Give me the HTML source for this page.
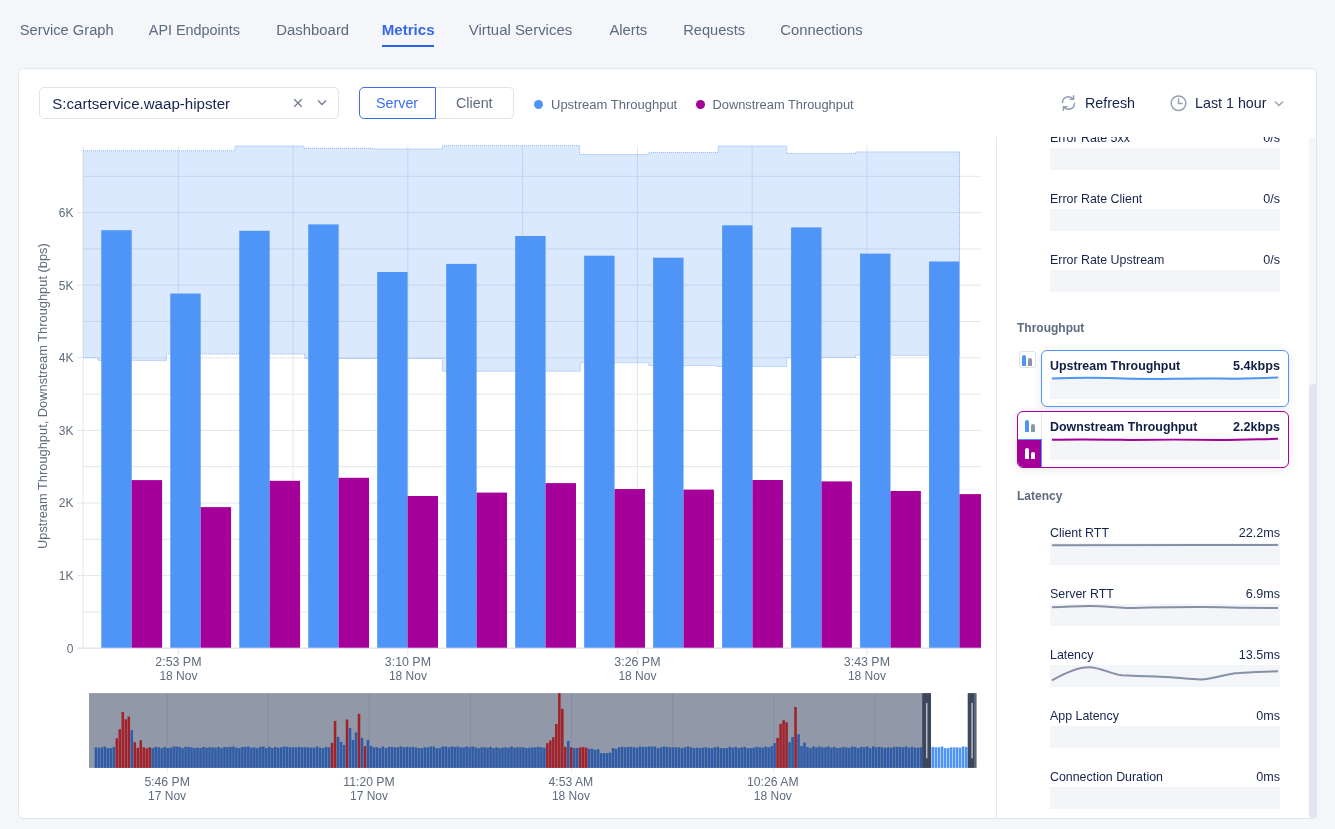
<!DOCTYPE html>
<html><head><meta charset="utf-8"><style>
*{box-sizing:border-box}
html,body{margin:0;padding:0}
body{width:1335px;height:829px;overflow:hidden;background:#f5f6f9;position:relative;font-family:"Liberation Sans",sans-serif;-webkit-font-smoothing:antialiased}
#wrap{position:absolute;left:0;top:0;width:1335px;height:829px;will-change:transform}
.tab{position:absolute;top:21px;font-size:14.6px;line-height:18px;color:#5b6a80;white-space:nowrap}
.tab.act{color:#3668e9;font-weight:700}
.uline{position:absolute;left:382px;top:45px;width:52px;height:2px;background:#2a61ef}
.card{position:absolute;left:18px;top:68px;width:1299px;height:751px;background:#fff;border:1px solid #e1e5ee;border-radius:5px}
.abs{position:absolute;white-space:nowrap}
.box{position:absolute;border:1px solid #dfe3ec;border-radius:5px;background:#fff}
.lab{position:absolute;left:1050px;font-size:12.4px;line-height:14px;color:#15244d;white-space:nowrap}
.val{position:absolute;right:55px;font-size:12.6px;line-height:14px;color:#15244d;white-space:nowrap;text-align:right}
.spk{position:absolute;left:1050px;width:230px;height:22px;background:#f4f5f8}
.sect{position:absolute;left:1017px;font-size:12px;font-weight:700;color:#5d6b80;line-height:14px;white-space:nowrap}
.tcard{position:absolute;border:1px solid;border-radius:6px;background:#fff;box-shadow:0 2px 10px rgba(30,40,70,0.10)}
.ibox{position:absolute;width:17px;height:17px;border:1px solid #dfe3ec;border-radius:3px;background:#fff}
.ib{position:absolute;width:4px;border-radius:2px 2px 0 0}
.panel{position:absolute;left:996px;top:137px;width:320px;height:681px;overflow:hidden}
</style></head><body><div id="wrap">
<div class="tab" style="left:19.8px;font-size:14.7px">Service Graph</div>
<div class="tab" style="left:148.8px;font-size:14.4px">API Endpoints</div>
<div class="tab" style="left:276.3px;font-size:14.9px">Dashboard</div>
<div class="tab act" style="left:381.7px;font-size:15.1px">Metrics</div>
<div class="tab" style="left:468.7px;font-size:14.95px">Virtual Services</div>
<div class="tab" style="left:609.4px;font-size:14.8px">Alerts</div>
<div class="tab" style="left:683.2px;font-size:14.65px">Requests</div>
<div class="tab" style="left:780.2px;font-size:14.85px">Connections</div>
<div class="uline"></div>
<div class="card"></div>

<div class="box" style="left:39px;top:87px;width:300px;height:32px;border-color:#dfe3ec"></div>
<div class="abs" style="left:52.3px;top:94.5px;font-size:15.1px;line-height:17px;color:#15244d">S:cartservice.waap-hipster</div>
<svg class="abs" style="left:293px;top:97.5px" width="10" height="10" viewBox="0 0 10 10"><path d="M1.3,1.3 L8.7,8.7 M8.7,1.3 L1.3,8.7" stroke="#6f7c90" stroke-width="1.3"/></svg>
<svg class="abs" style="left:317px;top:99px" width="10" height="7" viewBox="0 0 10 7"><path d="M1,1.5 L5,5.5 L9,1.5" fill="none" stroke="#6f7c90" stroke-width="1.3"/></svg>
<div class="box" style="left:436px;top:87px;width:78px;height:32px;border-color:#dfe3ec;border-left:none;border-radius:0 5px 5px 0"></div>
<div class="box" style="left:359px;top:87px;width:77px;height:32px;border-color:#3a6ef0;border-radius:5px 0 0 5px"></div>
<div class="abs" style="left:376px;top:95px;font-size:14.3px;line-height:17px;color:#3a6ef0">Server</div>
<div class="abs" style="left:456px;top:95px;font-size:14.3px;line-height:17px;color:#5d6b80">Client</div>
<div class="abs" style="left:534px;top:100px;width:9.4px;height:9.4px;border-radius:50%;background:#4f95f7"></div>
<div class="abs" style="left:551px;top:97px;font-size:13px;line-height:15px;color:#5d6b80">Upstream Throughput</div>
<div class="abs" style="left:696px;top:100px;width:9.4px;height:9.4px;border-radius:50%;background:#a5009a"></div>
<div class="abs" style="left:712.5px;top:97px;font-size:12.85px;line-height:15px;color:#5d6b80">Downstream Throughput</div>
<svg class="abs" style="left:1060px;top:94px" width="17" height="18" viewBox="0 0 17 18"><g fill="none" stroke="#939fb3" stroke-width="1.5" stroke-linecap="round"><path d="M2.5,8.5 A6,6 0 0 1 13.2,5"/><path d="M13.6,1.8 L13.6,5.3 L10.2,5.3"/><path d="M14.5,9.5 A6,6 0 0 1 3.8,13"/><path d="M3.4,16.2 L3.4,12.7 L6.8,12.7"/></g></svg>
<div class="abs" style="left:1085px;top:95px;font-size:14.3px;line-height:17px;color:#15244d">Refresh</div>
<svg class="abs" style="left:1169px;top:94px" width="19" height="18" viewBox="0 0 19 18"><g fill="none" stroke="#939fb3" stroke-width="1.5"><circle cx="9.5" cy="9.2" r="7.3"/><path d="M9.5,5 L9.5,9.5 L13,9.5" stroke-linecap="round"/></g></svg>
<div class="abs" style="left:1195px;top:95px;font-size:14.3px;line-height:17px;color:#15244d">Last 1 hour</div>
<svg class="abs" style="left:1274px;top:100px" width="10" height="7" viewBox="0 0 10 7"><path d="M1,1.5 L5,5.5 L9,1.5" fill="none" stroke="#939fb3" stroke-width="1.3"/></svg>

<svg width="1335" height="829" style="position:absolute;left:0;top:0;font-family:'Liberation Sans',sans-serif">
<line x1="83" y1="648.2" x2="981" y2="648.2" stroke="#e3e6ec" stroke-width="1"/>
<line x1="83" y1="611.9" x2="981" y2="611.9" stroke="#e3e6ec" stroke-width="1"/>
<line x1="83" y1="575.6" x2="981" y2="575.6" stroke="#e3e6ec" stroke-width="1"/>
<line x1="83" y1="539.3" x2="981" y2="539.3" stroke="#e3e6ec" stroke-width="1"/>
<line x1="83" y1="503.0" x2="981" y2="503.0" stroke="#e3e6ec" stroke-width="1"/>
<line x1="83" y1="466.7" x2="981" y2="466.7" stroke="#e3e6ec" stroke-width="1"/>
<line x1="83" y1="430.4" x2="981" y2="430.4" stroke="#e3e6ec" stroke-width="1"/>
<line x1="83" y1="394.1" x2="981" y2="394.1" stroke="#e3e6ec" stroke-width="1"/>
<line x1="83" y1="357.8" x2="981" y2="357.8" stroke="#e3e6ec" stroke-width="1"/>
<line x1="83" y1="321.5" x2="981" y2="321.5" stroke="#e3e6ec" stroke-width="1"/>
<line x1="83" y1="285.2" x2="981" y2="285.2" stroke="#e3e6ec" stroke-width="1"/>
<line x1="83" y1="248.9" x2="981" y2="248.9" stroke="#e3e6ec" stroke-width="1"/>
<line x1="83" y1="212.6" x2="981" y2="212.6" stroke="#e3e6ec" stroke-width="1"/>
<line x1="83" y1="176.3" x2="981" y2="176.3" stroke="#e3e6ec" stroke-width="1"/>
<line x1="83.0" y1="145.7" x2="83.0" y2="648.2" stroke="#e3e6ec" stroke-width="1"/>
<line x1="178.4" y1="145.7" x2="178.4" y2="648.2" stroke="#e3e6ec" stroke-width="1"/>
<line x1="293.1" y1="145.7" x2="293.1" y2="648.2" stroke="#e3e6ec" stroke-width="1"/>
<line x1="407.9" y1="145.7" x2="407.9" y2="648.2" stroke="#e3e6ec" stroke-width="1"/>
<line x1="522.6" y1="145.7" x2="522.6" y2="648.2" stroke="#e3e6ec" stroke-width="1"/>
<line x1="637.4" y1="145.7" x2="637.4" y2="648.2" stroke="#e3e6ec" stroke-width="1"/>
<line x1="752.1" y1="145.7" x2="752.1" y2="648.2" stroke="#e3e6ec" stroke-width="1"/>
<line x1="866.9" y1="145.7" x2="866.9" y2="648.2" stroke="#e3e6ec" stroke-width="1"/>
<path d="M83.0,150.7 L235.0,150.7 L235.0,146.0 L304.0,146.0 L304.0,148.3 L373.4,148.3 L373.4,149.0 L442.3,149.0 L442.3,145.7 L579.6,145.7 L579.6,154.5 L648.9,154.5 L648.9,152.4 L718.2,152.4 L718.2,146.0 L786.8,146.0 L786.8,153.5 L855.5,153.5 L855.5,151.9 L960.0,151.9 L960.0,355.3 L855.5,355.3 L855.5,357.4 L786.8,357.4 L786.8,366.5 L717.3,366.5 L717.3,365.6 L648.9,365.6 L648.9,362.8 L580.2,362.8 L580.2,371.2 L442.3,371.2 L442.3,358.5 L304.7,358.5 L304.7,354.0 L166.5,354.0 L166.5,360.4 L97.8,360.4 L97.8,357.7 L83.0,357.7 Z" fill="#4f95f7" fill-opacity="0.21"/>
<path d="M83.0,150.7 L235.0,150.7 L235.0,146.0 L304.0,146.0 L304.0,148.3 L373.4,148.3 L373.4,149.0 L442.3,149.0 L442.3,145.7 L579.6,145.7 L579.6,154.5 L648.9,154.5 L648.9,152.4 L718.2,152.4 L718.2,146.0 L786.8,146.0 L786.8,153.5 L855.5,153.5 L855.5,151.9 L960.0,151.9" fill="none" stroke="#8db5f5" stroke-width="1" stroke-dasharray="1,1"/>
<path d="M83.0,357.7 L97.8,357.7 L97.8,360.4 L166.5,360.4 L166.5,354.0 L304.7,354.0 L304.7,358.5 L442.3,358.5 L442.3,371.2 L580.2,371.2 L580.2,362.8 L648.9,362.8 L648.9,365.6 L717.3,365.6 L717.3,366.5 L786.8,366.5 L786.8,357.4 L855.5,357.4 L855.5,355.3 L960.0,355.3" fill="none" stroke="#8db5f5" stroke-width="1" stroke-dasharray="1,1"/>
<clipPath id="pc"><rect x="83" y="0" width="898" height="829"/></clipPath><g clip-path="url(#pc)">
<rect x="101.30" y="230.2" width="30.4" height="418.0" fill="#4f95f7"/>
<rect x="131.70" y="480.1" width="30.4" height="168.1" fill="#a5009a"/>
<rect x="170.28" y="293.5" width="30.4" height="354.7" fill="#4f95f7"/>
<rect x="200.68" y="507.1" width="30.4" height="141.1" fill="#a5009a"/>
<rect x="239.26" y="230.8" width="30.4" height="417.4" fill="#4f95f7"/>
<rect x="269.66" y="480.8" width="30.4" height="167.4" fill="#a5009a"/>
<rect x="308.24" y="224.4" width="30.4" height="423.8" fill="#4f95f7"/>
<rect x="338.64" y="477.8" width="30.4" height="170.4" fill="#a5009a"/>
<rect x="377.22" y="272" width="30.4" height="376.2" fill="#4f95f7"/>
<rect x="407.62" y="496" width="30.4" height="152.2" fill="#a5009a"/>
<rect x="446.20" y="263.9" width="30.4" height="384.3" fill="#4f95f7"/>
<rect x="476.60" y="492.6" width="30.4" height="155.6" fill="#a5009a"/>
<rect x="515.18" y="236" width="30.4" height="412.2" fill="#4f95f7"/>
<rect x="545.58" y="483.1" width="30.4" height="165.1" fill="#a5009a"/>
<rect x="584.16" y="255.7" width="30.4" height="392.5" fill="#4f95f7"/>
<rect x="614.56" y="489" width="30.4" height="159.2" fill="#a5009a"/>
<rect x="653.14" y="257.7" width="30.4" height="390.5" fill="#4f95f7"/>
<rect x="683.54" y="489.6" width="30.4" height="158.6" fill="#a5009a"/>
<rect x="722.12" y="225.3" width="30.4" height="422.9" fill="#4f95f7"/>
<rect x="752.52" y="480" width="30.4" height="168.2" fill="#a5009a"/>
<rect x="791.10" y="227.4" width="30.4" height="420.8" fill="#4f95f7"/>
<rect x="821.50" y="481.4" width="30.4" height="166.8" fill="#a5009a"/>
<rect x="860.08" y="253.6" width="30.4" height="394.6" fill="#4f95f7"/>
<rect x="890.48" y="491" width="30.4" height="157.2" fill="#a5009a"/>
<rect x="929.06" y="261.5" width="30.4" height="386.7" fill="#4f95f7"/>
<rect x="959.46" y="494.1" width="30.4" height="154.1" fill="#a5009a"/>
</g>
<line x1="959.5" y1="151.9" x2="959.5" y2="355.3" stroke="#8db5f5" stroke-width="1" stroke-dasharray="1,1"/>
<line x1="77" y1="648.2" x2="981" y2="648.2" stroke="#e3e6ec" stroke-width="1"/>
<line x1="77" y1="648.2" x2="83" y2="648.2" stroke="#e3e6ec" stroke-width="1"/>
<text x="73.5" y="652.6" text-anchor="end" font-size="12" fill="#5f6b7e">0</text>
<line x1="77" y1="575.6" x2="83" y2="575.6" stroke="#e3e6ec" stroke-width="1"/>
<text x="73.5" y="580.0" text-anchor="end" font-size="12" fill="#5f6b7e">1K</text>
<line x1="77" y1="503.0" x2="83" y2="503.0" stroke="#e3e6ec" stroke-width="1"/>
<text x="73.5" y="507.4" text-anchor="end" font-size="12" fill="#5f6b7e">2K</text>
<line x1="77" y1="430.4" x2="83" y2="430.4" stroke="#e3e6ec" stroke-width="1"/>
<text x="73.5" y="434.8" text-anchor="end" font-size="12" fill="#5f6b7e">3K</text>
<line x1="77" y1="357.8" x2="83" y2="357.8" stroke="#e3e6ec" stroke-width="1"/>
<text x="73.5" y="362.2" text-anchor="end" font-size="12" fill="#5f6b7e">4K</text>
<line x1="77" y1="285.2" x2="83" y2="285.2" stroke="#e3e6ec" stroke-width="1"/>
<text x="73.5" y="289.6" text-anchor="end" font-size="12" fill="#5f6b7e">5K</text>
<line x1="77" y1="212.6" x2="83" y2="212.6" stroke="#e3e6ec" stroke-width="1"/>
<text x="73.5" y="217.0" text-anchor="end" font-size="12" fill="#5f6b7e">6K</text>
<text transform="translate(47,549) rotate(-90)" font-size="12.85" fill="#5f6b7e">Upstream Throughput, Downstream Throughput (bps)</text>
<line x1="178.4" y1="648.2" x2="178.4" y2="655.2" stroke="#e3e6ec"/>
<text x="178.4" y="666" text-anchor="middle" font-size="12.4" fill="#5f6b7e">2:53 PM</text>
<text x="178.4" y="679.5" text-anchor="middle" font-size="12" fill="#5f6b7e">18 Nov</text>
<line x1="407.9" y1="648.2" x2="407.9" y2="655.2" stroke="#e3e6ec"/>
<text x="407.9" y="666" text-anchor="middle" font-size="12.4" fill="#5f6b7e">3:10 PM</text>
<text x="407.9" y="679.5" text-anchor="middle" font-size="12" fill="#5f6b7e">18 Nov</text>
<line x1="637.4" y1="648.2" x2="637.4" y2="655.2" stroke="#e3e6ec"/>
<text x="637.4" y="666" text-anchor="middle" font-size="12.4" fill="#5f6b7e">3:26 PM</text>
<text x="637.4" y="679.5" text-anchor="middle" font-size="12" fill="#5f6b7e">18 Nov</text>
<line x1="866.9" y1="648.2" x2="866.9" y2="655.2" stroke="#e3e6ec"/>
<text x="866.9" y="666" text-anchor="middle" font-size="12.4" fill="#5f6b7e">3:43 PM</text>
<text x="866.9" y="679.5" text-anchor="middle" font-size="12" fill="#5f6b7e">18 Nov</text>
<rect x="89" y="693.1" width="887.6" height="74.8" fill="#ffffff"/>
<rect x="89" y="693.1" width="833.1" height="74.8" fill="#9198a7"/>
<rect x="974" y="693.1" width="2.6" height="74.8" fill="#5d6679"/>
<line x1="167.1" y1="693.1" x2="167.1" y2="767.9" stroke="#7f879a" stroke-opacity="0.6"/>
<line x1="167.1" y1="767.9" x2="167.1" y2="772.9" stroke="#e6e9ef"/>
<line x1="268.2" y1="693.1" x2="268.2" y2="767.9" stroke="#7f879a" stroke-opacity="0.6"/>
<line x1="369.3" y1="693.1" x2="369.3" y2="767.9" stroke="#7f879a" stroke-opacity="0.6"/>
<line x1="369.3" y1="767.9" x2="369.3" y2="772.9" stroke="#e6e9ef"/>
<line x1="470.4" y1="693.1" x2="470.4" y2="767.9" stroke="#7f879a" stroke-opacity="0.6"/>
<line x1="571.5" y1="693.1" x2="571.5" y2="767.9" stroke="#7f879a" stroke-opacity="0.6"/>
<line x1="571.5" y1="767.9" x2="571.5" y2="772.9" stroke="#e6e9ef"/>
<line x1="672.6" y1="693.1" x2="672.6" y2="767.9" stroke="#7f879a" stroke-opacity="0.6"/>
<line x1="773.7" y1="693.1" x2="773.7" y2="767.9" stroke="#7f879a" stroke-opacity="0.6"/>
<line x1="773.7" y1="767.9" x2="773.7" y2="772.9" stroke="#e6e9ef"/>
<line x1="874.8" y1="693.1" x2="874.8" y2="767.9" stroke="#7f879a" stroke-opacity="0.6"/>
<rect x="94.60" y="747.3" width="2.55" height="20.6" fill="#2f5ca8"/>
<rect x="97.59" y="747.7" width="2.55" height="20.2" fill="#2f5ca8"/>
<rect x="100.58" y="747.3" width="2.55" height="20.6" fill="#2f5ca8"/>
<rect x="103.57" y="746.5" width="2.55" height="21.4" fill="#2f5ca8"/>
<rect x="106.56" y="748.1" width="2.55" height="19.8" fill="#2f5ca8"/>
<rect x="109.55" y="748.1" width="2.55" height="19.8" fill="#2f5ca8"/>
<rect x="112.54" y="746.9" width="2.55" height="21.0" fill="#2f5ca8"/>
<rect x="115.53" y="738.3" width="2.55" height="29.6" fill="#a3222a"/>
<rect x="118.52" y="729.3" width="2.55" height="38.6" fill="#a3222a"/>
<rect x="121.51" y="712.0" width="2.55" height="55.9" fill="#a3222a"/>
<rect x="124.50" y="719.3" width="2.55" height="48.6" fill="#a3222a"/>
<rect x="127.49" y="716.6" width="2.55" height="51.3" fill="#a3222a"/>
<rect x="130.48" y="730.1" width="2.55" height="37.8" fill="#2f5ca8"/>
<rect x="133.47" y="742.3" width="2.55" height="25.6" fill="#a3222a"/>
<rect x="136.46" y="747.9" width="2.55" height="20.0" fill="#a3222a"/>
<rect x="139.45" y="740.3" width="2.55" height="27.6" fill="#a3222a"/>
<rect x="142.44" y="747.3" width="2.55" height="20.6" fill="#a3222a"/>
<rect x="145.43" y="748.4" width="2.55" height="19.5" fill="#a3222a"/>
<rect x="148.42" y="747.3" width="2.55" height="20.6" fill="#a3222a"/>
<rect x="151.41" y="748.1" width="2.55" height="19.8" fill="#2f5ca8"/>
<rect x="154.40" y="746.9" width="2.55" height="21.0" fill="#2f5ca8"/>
<rect x="157.39" y="747.3" width="2.55" height="20.6" fill="#2f5ca8"/>
<rect x="160.38" y="748.1" width="2.55" height="19.8" fill="#2f5ca8"/>
<rect x="163.37" y="746.9" width="2.55" height="21.0" fill="#2f5ca8"/>
<rect x="166.36" y="748.1" width="2.55" height="19.8" fill="#2f5ca8"/>
<rect x="169.35" y="747.7" width="2.55" height="20.2" fill="#2f5ca8"/>
<rect x="172.34" y="746.5" width="2.55" height="21.4" fill="#2f5ca8"/>
<rect x="175.33" y="746.5" width="2.55" height="21.4" fill="#2f5ca8"/>
<rect x="178.32" y="746.9" width="2.55" height="21.0" fill="#2f5ca8"/>
<rect x="181.31" y="748.1" width="2.55" height="19.8" fill="#2f5ca8"/>
<rect x="184.30" y="746.9" width="2.55" height="21.0" fill="#2f5ca8"/>
<rect x="187.29" y="746.9" width="2.55" height="21.0" fill="#2f5ca8"/>
<rect x="190.28" y="747.3" width="2.55" height="20.6" fill="#2f5ca8"/>
<rect x="193.27" y="748.1" width="2.55" height="19.8" fill="#2f5ca8"/>
<rect x="196.26" y="747.7" width="2.55" height="20.2" fill="#2f5ca8"/>
<rect x="199.25" y="748.1" width="2.55" height="19.8" fill="#2f5ca8"/>
<rect x="202.24" y="746.9" width="2.55" height="21.0" fill="#2f5ca8"/>
<rect x="205.23" y="747.7" width="2.55" height="20.2" fill="#2f5ca8"/>
<rect x="208.22" y="747.3" width="2.55" height="20.6" fill="#2f5ca8"/>
<rect x="211.21" y="747.3" width="2.55" height="20.6" fill="#2f5ca8"/>
<rect x="214.20" y="747.7" width="2.55" height="20.2" fill="#2f5ca8"/>
<rect x="217.19" y="746.9" width="2.55" height="21.0" fill="#2f5ca8"/>
<rect x="220.18" y="748.1" width="2.55" height="19.8" fill="#2f5ca8"/>
<rect x="223.17" y="746.9" width="2.55" height="21.0" fill="#2f5ca8"/>
<rect x="226.16" y="747.3" width="2.55" height="20.6" fill="#2f5ca8"/>
<rect x="229.15" y="746.9" width="2.55" height="21.0" fill="#2f5ca8"/>
<rect x="232.14" y="746.5" width="2.55" height="21.4" fill="#2f5ca8"/>
<rect x="235.13" y="747.7" width="2.55" height="20.2" fill="#2f5ca8"/>
<rect x="238.12" y="748.1" width="2.55" height="19.8" fill="#2f5ca8"/>
<rect x="241.11" y="746.9" width="2.55" height="21.0" fill="#2f5ca8"/>
<rect x="244.10" y="746.9" width="2.55" height="21.0" fill="#2f5ca8"/>
<rect x="247.09" y="746.5" width="2.55" height="21.4" fill="#2f5ca8"/>
<rect x="250.08" y="747.7" width="2.55" height="20.2" fill="#2f5ca8"/>
<rect x="253.07" y="747.3" width="2.55" height="20.6" fill="#2f5ca8"/>
<rect x="256.06" y="748.1" width="2.55" height="19.8" fill="#2f5ca8"/>
<rect x="259.05" y="746.9" width="2.55" height="21.0" fill="#2f5ca8"/>
<rect x="262.04" y="746.5" width="2.55" height="21.4" fill="#2f5ca8"/>
<rect x="265.03" y="748.1" width="2.55" height="19.8" fill="#2f5ca8"/>
<rect x="268.02" y="746.9" width="2.55" height="21.0" fill="#2f5ca8"/>
<rect x="271.01" y="748.1" width="2.55" height="19.8" fill="#2f5ca8"/>
<rect x="274.00" y="746.9" width="2.55" height="21.0" fill="#2f5ca8"/>
<rect x="276.99" y="747.7" width="2.55" height="20.2" fill="#2f5ca8"/>
<rect x="279.98" y="747.3" width="2.55" height="20.6" fill="#2f5ca8"/>
<rect x="282.97" y="746.5" width="2.55" height="21.4" fill="#2f5ca8"/>
<rect x="285.96" y="746.9" width="2.55" height="21.0" fill="#2f5ca8"/>
<rect x="288.95" y="747.3" width="2.55" height="20.6" fill="#2f5ca8"/>
<rect x="291.94" y="747.3" width="2.55" height="20.6" fill="#2f5ca8"/>
<rect x="294.93" y="747.3" width="2.55" height="20.6" fill="#2f5ca8"/>
<rect x="297.92" y="746.9" width="2.55" height="21.0" fill="#2f5ca8"/>
<rect x="300.91" y="747.3" width="2.55" height="20.6" fill="#2f5ca8"/>
<rect x="303.90" y="747.3" width="2.55" height="20.6" fill="#2f5ca8"/>
<rect x="306.89" y="747.3" width="2.55" height="20.6" fill="#2f5ca8"/>
<rect x="309.88" y="747.7" width="2.55" height="20.2" fill="#2f5ca8"/>
<rect x="312.87" y="747.7" width="2.55" height="20.2" fill="#2f5ca8"/>
<rect x="315.86" y="746.5" width="2.55" height="21.4" fill="#2f5ca8"/>
<rect x="318.85" y="747.7" width="2.55" height="20.2" fill="#2f5ca8"/>
<rect x="321.84" y="748.1" width="2.55" height="19.8" fill="#2f5ca8"/>
<rect x="324.83" y="746.9" width="2.55" height="21.0" fill="#2f5ca8"/>
<rect x="327.82" y="747.3" width="2.55" height="20.6" fill="#2f5ca8"/>
<rect x="330.81" y="742.9" width="2.55" height="25.0" fill="#a3222a"/>
<rect x="333.80" y="720.9" width="2.55" height="47.0" fill="#a3222a"/>
<rect x="336.79" y="736.9" width="2.55" height="31.0" fill="#2f5ca8"/>
<rect x="339.78" y="741.9" width="2.55" height="26.0" fill="#2f5ca8"/>
<rect x="342.77" y="744.9" width="2.55" height="23.0" fill="#2f5ca8"/>
<rect x="345.76" y="719.5" width="2.55" height="48.4" fill="#a3222a"/>
<rect x="348.75" y="727.9" width="2.55" height="40.0" fill="#2f5ca8"/>
<rect x="351.74" y="739.9" width="2.55" height="28.0" fill="#2f5ca8"/>
<rect x="354.73" y="732.5" width="2.55" height="35.4" fill="#2f5ca8"/>
<rect x="357.72" y="713.9" width="2.55" height="54.0" fill="#a3222a"/>
<rect x="360.71" y="737.9" width="2.55" height="30.0" fill="#2f5ca8"/>
<rect x="363.70" y="746.2" width="2.55" height="21.7" fill="#a3222a"/>
<rect x="366.69" y="739.9" width="2.55" height="28.0" fill="#2f5ca8"/>
<rect x="369.68" y="745.9" width="2.55" height="22.0" fill="#2f5ca8"/>
<rect x="372.67" y="747.3" width="2.55" height="20.6" fill="#2f5ca8"/>
<rect x="375.66" y="747.3" width="2.55" height="20.6" fill="#2f5ca8"/>
<rect x="378.65" y="748.1" width="2.55" height="19.8" fill="#2f5ca8"/>
<rect x="381.64" y="746.5" width="2.55" height="21.4" fill="#2f5ca8"/>
<rect x="384.63" y="748.1" width="2.55" height="19.8" fill="#2f5ca8"/>
<rect x="387.62" y="746.9" width="2.55" height="21.0" fill="#2f5ca8"/>
<rect x="390.61" y="746.9" width="2.55" height="21.0" fill="#2f5ca8"/>
<rect x="393.60" y="747.3" width="2.55" height="20.6" fill="#2f5ca8"/>
<rect x="396.59" y="747.3" width="2.55" height="20.6" fill="#2f5ca8"/>
<rect x="399.58" y="746.5" width="2.55" height="21.4" fill="#2f5ca8"/>
<rect x="402.57" y="747.3" width="2.55" height="20.6" fill="#2f5ca8"/>
<rect x="405.56" y="746.9" width="2.55" height="21.0" fill="#2f5ca8"/>
<rect x="408.55" y="747.3" width="2.55" height="20.6" fill="#2f5ca8"/>
<rect x="411.54" y="746.9" width="2.55" height="21.0" fill="#2f5ca8"/>
<rect x="414.53" y="747.3" width="2.55" height="20.6" fill="#2f5ca8"/>
<rect x="417.52" y="748.1" width="2.55" height="19.8" fill="#2f5ca8"/>
<rect x="420.51" y="748.1" width="2.55" height="19.8" fill="#2f5ca8"/>
<rect x="423.50" y="747.3" width="2.55" height="20.6" fill="#2f5ca8"/>
<rect x="426.49" y="747.3" width="2.55" height="20.6" fill="#2f5ca8"/>
<rect x="429.48" y="746.5" width="2.55" height="21.4" fill="#2f5ca8"/>
<rect x="432.47" y="746.5" width="2.55" height="21.4" fill="#2f5ca8"/>
<rect x="435.46" y="748.1" width="2.55" height="19.8" fill="#2f5ca8"/>
<rect x="438.45" y="748.1" width="2.55" height="19.8" fill="#2f5ca8"/>
<rect x="441.44" y="746.5" width="2.55" height="21.4" fill="#2f5ca8"/>
<rect x="444.43" y="746.5" width="2.55" height="21.4" fill="#2f5ca8"/>
<rect x="447.42" y="747.3" width="2.55" height="20.6" fill="#2f5ca8"/>
<rect x="450.41" y="746.5" width="2.55" height="21.4" fill="#2f5ca8"/>
<rect x="453.40" y="746.9" width="2.55" height="21.0" fill="#2f5ca8"/>
<rect x="456.39" y="746.5" width="2.55" height="21.4" fill="#2f5ca8"/>
<rect x="459.38" y="747.3" width="2.55" height="20.6" fill="#2f5ca8"/>
<rect x="462.37" y="747.3" width="2.55" height="20.6" fill="#2f5ca8"/>
<rect x="465.36" y="746.5" width="2.55" height="21.4" fill="#2f5ca8"/>
<rect x="468.35" y="747.3" width="2.55" height="20.6" fill="#2f5ca8"/>
<rect x="471.34" y="746.5" width="2.55" height="21.4" fill="#2f5ca8"/>
<rect x="474.33" y="747.3" width="2.55" height="20.6" fill="#2f5ca8"/>
<rect x="477.32" y="748.1" width="2.55" height="19.8" fill="#2f5ca8"/>
<rect x="480.31" y="747.3" width="2.55" height="20.6" fill="#2f5ca8"/>
<rect x="483.30" y="747.3" width="2.55" height="20.6" fill="#2f5ca8"/>
<rect x="486.29" y="747.7" width="2.55" height="20.2" fill="#2f5ca8"/>
<rect x="489.28" y="746.9" width="2.55" height="21.0" fill="#2f5ca8"/>
<rect x="492.27" y="748.1" width="2.55" height="19.8" fill="#2f5ca8"/>
<rect x="495.26" y="747.3" width="2.55" height="20.6" fill="#2f5ca8"/>
<rect x="498.25" y="748.1" width="2.55" height="19.8" fill="#2f5ca8"/>
<rect x="501.24" y="747.7" width="2.55" height="20.2" fill="#2f5ca8"/>
<rect x="504.23" y="747.3" width="2.55" height="20.6" fill="#2f5ca8"/>
<rect x="507.22" y="747.7" width="2.55" height="20.2" fill="#2f5ca8"/>
<rect x="510.21" y="746.5" width="2.55" height="21.4" fill="#2f5ca8"/>
<rect x="513.20" y="747.7" width="2.55" height="20.2" fill="#2f5ca8"/>
<rect x="516.19" y="747.3" width="2.55" height="20.6" fill="#2f5ca8"/>
<rect x="519.18" y="747.3" width="2.55" height="20.6" fill="#2f5ca8"/>
<rect x="522.17" y="747.3" width="2.55" height="20.6" fill="#2f5ca8"/>
<rect x="525.16" y="748.1" width="2.55" height="19.8" fill="#2f5ca8"/>
<rect x="528.15" y="747.7" width="2.55" height="20.2" fill="#2f5ca8"/>
<rect x="531.14" y="747.3" width="2.55" height="20.6" fill="#2f5ca8"/>
<rect x="534.13" y="747.3" width="2.55" height="20.6" fill="#2f5ca8"/>
<rect x="537.12" y="746.9" width="2.55" height="21.0" fill="#2f5ca8"/>
<rect x="540.11" y="747.3" width="2.55" height="20.6" fill="#2f5ca8"/>
<rect x="543.10" y="747.7" width="2.55" height="20.2" fill="#2f5ca8"/>
<rect x="546.09" y="743.2" width="2.55" height="24.7" fill="#a3222a"/>
<rect x="549.08" y="740.5" width="2.55" height="27.4" fill="#a3222a"/>
<rect x="552.07" y="737.2" width="2.55" height="30.7" fill="#a3222a"/>
<rect x="555.06" y="724.0" width="2.55" height="43.9" fill="#a3222a"/>
<rect x="558.05" y="693.2" width="2.55" height="74.7" fill="#a3222a"/>
<rect x="561.04" y="708.9" width="2.55" height="59.0" fill="#a3222a"/>
<rect x="564.03" y="746.9" width="2.55" height="21.0" fill="#a3222a"/>
<rect x="567.02" y="740.9" width="2.55" height="27.0" fill="#2f5ca8"/>
<rect x="570.01" y="747.3" width="2.55" height="20.6" fill="#a3222a"/>
<rect x="573.00" y="748.1" width="2.55" height="19.8" fill="#2f5ca8"/>
<rect x="575.99" y="747.9" width="2.55" height="20.0" fill="#2f5ca8"/>
<rect x="578.98" y="747.5" width="2.55" height="20.4" fill="#a3222a"/>
<rect x="581.97" y="747.1" width="2.55" height="20.8" fill="#a3222a"/>
<rect x="584.96" y="747.7" width="2.55" height="20.2" fill="#a3222a"/>
<rect x="587.95" y="748.9" width="2.55" height="19.0" fill="#2f5ca8"/>
<rect x="590.94" y="748.9" width="2.55" height="19.0" fill="#2f5ca8"/>
<rect x="593.93" y="749.9" width="2.55" height="18.0" fill="#2f5ca8"/>
<rect x="596.92" y="749.1" width="2.55" height="18.8" fill="#2f5ca8"/>
<rect x="599.91" y="753.1" width="2.55" height="14.8" fill="#2f5ca8"/>
<rect x="602.90" y="753.1" width="2.55" height="14.8" fill="#2f5ca8"/>
<rect x="605.89" y="753.1" width="2.55" height="14.8" fill="#2f5ca8"/>
<rect x="608.88" y="752.7" width="2.55" height="15.2" fill="#2f5ca8"/>
<rect x="611.87" y="748.1" width="2.55" height="19.8" fill="#2f5ca8"/>
<rect x="614.86" y="748.9" width="2.55" height="19.0" fill="#2f5ca8"/>
<rect x="617.85" y="747.3" width="2.55" height="20.6" fill="#2f5ca8"/>
<rect x="620.84" y="746.9" width="2.55" height="21.0" fill="#2f5ca8"/>
<rect x="623.83" y="747.3" width="2.55" height="20.6" fill="#2f5ca8"/>
<rect x="626.82" y="746.9" width="2.55" height="21.0" fill="#2f5ca8"/>
<rect x="629.81" y="746.9" width="2.55" height="21.0" fill="#2f5ca8"/>
<rect x="632.80" y="747.3" width="2.55" height="20.6" fill="#2f5ca8"/>
<rect x="635.79" y="747.7" width="2.55" height="20.2" fill="#2f5ca8"/>
<rect x="638.78" y="746.5" width="2.55" height="21.4" fill="#2f5ca8"/>
<rect x="641.77" y="746.9" width="2.55" height="21.0" fill="#2f5ca8"/>
<rect x="644.76" y="746.9" width="2.55" height="21.0" fill="#2f5ca8"/>
<rect x="647.75" y="746.5" width="2.55" height="21.4" fill="#2f5ca8"/>
<rect x="650.74" y="746.5" width="2.55" height="21.4" fill="#2f5ca8"/>
<rect x="653.73" y="746.5" width="2.55" height="21.4" fill="#2f5ca8"/>
<rect x="656.72" y="748.1" width="2.55" height="19.8" fill="#2f5ca8"/>
<rect x="659.71" y="747.3" width="2.55" height="20.6" fill="#2f5ca8"/>
<rect x="662.70" y="746.5" width="2.55" height="21.4" fill="#2f5ca8"/>
<rect x="665.69" y="746.9" width="2.55" height="21.0" fill="#2f5ca8"/>
<rect x="668.68" y="747.3" width="2.55" height="20.6" fill="#2f5ca8"/>
<rect x="671.67" y="747.3" width="2.55" height="20.6" fill="#2f5ca8"/>
<rect x="674.66" y="747.3" width="2.55" height="20.6" fill="#2f5ca8"/>
<rect x="677.65" y="747.3" width="2.55" height="20.6" fill="#2f5ca8"/>
<rect x="680.64" y="748.1" width="2.55" height="19.8" fill="#2f5ca8"/>
<rect x="683.63" y="747.3" width="2.55" height="20.6" fill="#2f5ca8"/>
<rect x="686.62" y="746.5" width="2.55" height="21.4" fill="#2f5ca8"/>
<rect x="689.61" y="747.3" width="2.55" height="20.6" fill="#2f5ca8"/>
<rect x="692.60" y="748.1" width="2.55" height="19.8" fill="#2f5ca8"/>
<rect x="695.59" y="747.7" width="2.55" height="20.2" fill="#2f5ca8"/>
<rect x="698.58" y="748.1" width="2.55" height="19.8" fill="#2f5ca8"/>
<rect x="701.57" y="747.7" width="2.55" height="20.2" fill="#2f5ca8"/>
<rect x="704.56" y="747.3" width="2.55" height="20.6" fill="#2f5ca8"/>
<rect x="707.55" y="747.7" width="2.55" height="20.2" fill="#2f5ca8"/>
<rect x="710.54" y="748.1" width="2.55" height="19.8" fill="#2f5ca8"/>
<rect x="713.53" y="747.3" width="2.55" height="20.6" fill="#2f5ca8"/>
<rect x="716.52" y="746.9" width="2.55" height="21.0" fill="#2f5ca8"/>
<rect x="719.51" y="748.1" width="2.55" height="19.8" fill="#2f5ca8"/>
<rect x="722.50" y="748.1" width="2.55" height="19.8" fill="#2f5ca8"/>
<rect x="725.49" y="748.1" width="2.55" height="19.8" fill="#2f5ca8"/>
<rect x="728.48" y="746.9" width="2.55" height="21.0" fill="#2f5ca8"/>
<rect x="731.47" y="747.7" width="2.55" height="20.2" fill="#2f5ca8"/>
<rect x="734.46" y="746.9" width="2.55" height="21.0" fill="#2f5ca8"/>
<rect x="737.45" y="748.1" width="2.55" height="19.8" fill="#2f5ca8"/>
<rect x="740.44" y="747.3" width="2.55" height="20.6" fill="#2f5ca8"/>
<rect x="743.43" y="746.9" width="2.55" height="21.0" fill="#2f5ca8"/>
<rect x="746.42" y="748.1" width="2.55" height="19.8" fill="#2f5ca8"/>
<rect x="749.41" y="748.1" width="2.55" height="19.8" fill="#2f5ca8"/>
<rect x="752.40" y="747.7" width="2.55" height="20.2" fill="#2f5ca8"/>
<rect x="755.39" y="746.9" width="2.55" height="21.0" fill="#2f5ca8"/>
<rect x="758.38" y="747.3" width="2.55" height="20.6" fill="#2f5ca8"/>
<rect x="761.37" y="747.7" width="2.55" height="20.2" fill="#2f5ca8"/>
<rect x="764.36" y="746.5" width="2.55" height="21.4" fill="#2f5ca8"/>
<rect x="767.35" y="747.3" width="2.55" height="20.6" fill="#2f5ca8"/>
<rect x="770.34" y="746.1" width="2.55" height="21.8" fill="#2f5ca8"/>
<rect x="773.33" y="743.2" width="2.55" height="24.7" fill="#2f5ca8"/>
<rect x="776.32" y="737.9" width="2.55" height="30.0" fill="#a3222a"/>
<rect x="779.31" y="723.9" width="2.55" height="44.0" fill="#a3222a"/>
<rect x="782.30" y="720.2" width="2.55" height="47.7" fill="#a3222a"/>
<rect x="785.29" y="722.2" width="2.55" height="45.7" fill="#a3222a"/>
<rect x="788.28" y="742.1" width="2.55" height="25.8" fill="#2f5ca8"/>
<rect x="791.27" y="737.0" width="2.55" height="30.9" fill="#2f5ca8"/>
<rect x="794.26" y="707.0" width="2.55" height="60.9" fill="#a3222a"/>
<rect x="797.25" y="734.2" width="2.55" height="33.7" fill="#2f5ca8"/>
<rect x="800.24" y="746.1" width="2.55" height="21.8" fill="#2f5ca8"/>
<rect x="803.23" y="742.6" width="2.55" height="25.3" fill="#2f5ca8"/>
<rect x="806.22" y="747.0" width="2.55" height="20.9" fill="#2f5ca8"/>
<rect x="809.21" y="748.1" width="2.55" height="19.8" fill="#2f5ca8"/>
<rect x="812.20" y="746.5" width="2.55" height="21.4" fill="#2f5ca8"/>
<rect x="815.19" y="747.3" width="2.55" height="20.6" fill="#2f5ca8"/>
<rect x="818.18" y="746.5" width="2.55" height="21.4" fill="#2f5ca8"/>
<rect x="821.17" y="747.3" width="2.55" height="20.6" fill="#2f5ca8"/>
<rect x="824.16" y="747.3" width="2.55" height="20.6" fill="#2f5ca8"/>
<rect x="827.15" y="746.5" width="2.55" height="21.4" fill="#2f5ca8"/>
<rect x="830.14" y="747.7" width="2.55" height="20.2" fill="#2f5ca8"/>
<rect x="833.13" y="746.9" width="2.55" height="21.0" fill="#2f5ca8"/>
<rect x="836.12" y="748.1" width="2.55" height="19.8" fill="#2f5ca8"/>
<rect x="839.11" y="747.7" width="2.55" height="20.2" fill="#2f5ca8"/>
<rect x="842.10" y="746.9" width="2.55" height="21.0" fill="#2f5ca8"/>
<rect x="845.09" y="747.3" width="2.55" height="20.6" fill="#2f5ca8"/>
<rect x="848.08" y="747.7" width="2.55" height="20.2" fill="#2f5ca8"/>
<rect x="851.07" y="746.5" width="2.55" height="21.4" fill="#2f5ca8"/>
<rect x="854.06" y="746.9" width="2.55" height="21.0" fill="#2f5ca8"/>
<rect x="857.05" y="748.1" width="2.55" height="19.8" fill="#2f5ca8"/>
<rect x="860.04" y="746.9" width="2.55" height="21.0" fill="#2f5ca8"/>
<rect x="863.03" y="747.3" width="2.55" height="20.6" fill="#2f5ca8"/>
<rect x="866.02" y="746.5" width="2.55" height="21.4" fill="#2f5ca8"/>
<rect x="869.01" y="748.1" width="2.55" height="19.8" fill="#2f5ca8"/>
<rect x="872.00" y="746.5" width="2.55" height="21.4" fill="#2f5ca8"/>
<rect x="874.99" y="747.3" width="2.55" height="20.6" fill="#2f5ca8"/>
<rect x="877.98" y="746.9" width="2.55" height="21.0" fill="#2f5ca8"/>
<rect x="880.97" y="747.3" width="2.55" height="20.6" fill="#2f5ca8"/>
<rect x="883.96" y="747.7" width="2.55" height="20.2" fill="#2f5ca8"/>
<rect x="886.95" y="747.3" width="2.55" height="20.6" fill="#2f5ca8"/>
<rect x="889.94" y="747.7" width="2.55" height="20.2" fill="#2f5ca8"/>
<rect x="892.93" y="746.9" width="2.55" height="21.0" fill="#2f5ca8"/>
<rect x="895.92" y="746.9" width="2.55" height="21.0" fill="#2f5ca8"/>
<rect x="898.91" y="746.9" width="2.55" height="21.0" fill="#2f5ca8"/>
<rect x="901.90" y="747.3" width="2.55" height="20.6" fill="#2f5ca8"/>
<rect x="904.89" y="746.5" width="2.55" height="21.4" fill="#2f5ca8"/>
<rect x="907.88" y="747.7" width="2.55" height="20.2" fill="#2f5ca8"/>
<rect x="910.87" y="746.9" width="2.55" height="21.0" fill="#2f5ca8"/>
<rect x="913.86" y="747.7" width="2.55" height="20.2" fill="#2f5ca8"/>
<rect x="916.85" y="747.7" width="2.55" height="20.2" fill="#2f5ca8"/>
<rect x="919.84" y="747.3" width="2.55" height="20.6" fill="#2f5ca8"/>
<rect x="922.83" y="746.5" width="2.55" height="21.4" fill="#2f5ca8"/>
<rect x="925.82" y="747.7" width="2.55" height="20.2" fill="#2f5ca8"/>
<rect x="928.81" y="747.7" width="2.55" height="20.2" fill="#2f5ca8"/>
<rect x="931.80" y="746.9" width="2.55" height="21.0" fill="#4f95f7"/>
<rect x="934.79" y="747.3" width="2.55" height="20.6" fill="#4f95f7"/>
<rect x="937.78" y="747.3" width="2.55" height="20.6" fill="#4f95f7"/>
<rect x="940.77" y="746.5" width="2.55" height="21.4" fill="#4f95f7"/>
<rect x="943.76" y="748.1" width="2.55" height="19.8" fill="#4f95f7"/>
<rect x="946.75" y="748.1" width="2.55" height="19.8" fill="#4f95f7"/>
<rect x="949.74" y="747.3" width="2.55" height="20.6" fill="#4f95f7"/>
<rect x="952.73" y="747.3" width="2.55" height="20.6" fill="#4f95f7"/>
<rect x="955.72" y="747.3" width="2.55" height="20.6" fill="#4f95f7"/>
<rect x="958.71" y="747.7" width="2.55" height="20.2" fill="#4f95f7"/>
<rect x="961.70" y="746.5" width="2.55" height="21.4" fill="#4f95f7"/>
<rect x="964.69" y="746.9" width="2.55" height="21.0" fill="#4f95f7"/>
<rect x="967.68" y="747.3" width="2.55" height="20.6" fill="#4f95f7"/>
<rect x="922.1" y="693.1" width="8.9" height="74.8" fill="#3c475d"/>
<rect x="926.1" y="702.9" width="1.3" height="55.4" fill="#c8ccd4"/>
<rect x="967.7" y="693.1" width="6.3" height="74.8" fill="#3c475d"/>
<rect x="971.4" y="702.9" width="1.3" height="55.4" fill="#c8ccd4"/>
<text x="167.1" y="786" text-anchor="middle" font-size="12.2" fill="#5f6b7e">5:46 PM</text>
<text x="167.1" y="799.6" text-anchor="middle" font-size="12" fill="#5f6b7e">17 Nov</text>
<text x="369.0" y="786" text-anchor="middle" font-size="12.2" fill="#5f6b7e">11:20 PM</text>
<text x="369.0" y="799.6" text-anchor="middle" font-size="12" fill="#5f6b7e">17 Nov</text>
<text x="570.9" y="786" text-anchor="middle" font-size="12.2" fill="#5f6b7e">4:53 AM</text>
<text x="570.9" y="799.6" text-anchor="middle" font-size="12" fill="#5f6b7e">18 Nov</text>
<text x="772.8" y="786" text-anchor="middle" font-size="12.2" fill="#5f6b7e">10:26 AM</text>
<text x="772.8" y="799.6" text-anchor="middle" font-size="12" fill="#5f6b7e">18 Nov</text>
</svg>
<div style="position:absolute;left:996px;top:137px;width:1px;height:681px;background:#e3e7ee"></div>
<div style="position:absolute;left:0;top:0;width:1335px;height:829px;clip-path:inset(137px 0 11px 997px)">
<div class="lab" style="top:130.9px;">Error Rate 5xx</div>
<div class="val" style="top:130.9px;">0/s</div>
<div class="spk" style="top:148.0px"></div>
<div class="lab" style="top:191.8px;">Error Rate Client</div>
<div class="val" style="top:191.8px;">0/s</div>
<div class="spk" style="top:209.0px"></div>
<div class="lab" style="top:252.8px;">Error Rate Upstream</div>
<div class="val" style="top:252.8px;">0/s</div>
<div class="spk" style="top:270.0px"></div>
<div class="sect" style="top:320.9px">Throughput</div>
<div class="tcard" style="left:1041px;top:350px;width:248px;height:57px;border-color:#4f95f7"></div>
<div class="ibox" style="left:1018.5px;top:351px"></div>
<div class="ib" style="left:1022px;top:354.6px;height:11px;background:#4f95f7"></div>
<div class="ib" style="left:1028px;top:358px;height:7.6px;background:#8a96a8"></div>
<div class="lab" style="top:358.6px;font-weight:700;color:#0f1e45;">Upstream Throughput</div>
<div class="val" style="top:358.6px;font-weight:700;color:#0f1e45;">5.4kbps</div>
<div class="spk" style="top:376.5px"></div>
<div class="tcard" style="left:1017px;top:411px;width:272px;height:57px;border-color:#a5009a"></div>
<div style="position:absolute;left:1041px;top:412px;width:1px;height:27px;background:#e6e9ef"></div>
<div style="position:absolute;left:1018px;top:439px;width:24px;height:28px;background:#a5009a;border-bottom-left-radius:5px;border-top:1px solid #4f95f7;border-right:1px solid #4f95f7"></div>
<div class="ib" style="left:1025px;top:420px;height:11.6px;background:#4f95f7"></div>
<div class="ib" style="left:1031px;top:424px;height:7.6px;background:#8a96a8"></div>
<div class="ib" style="left:1025px;top:448px;height:10.8px;background:#fff"></div>
<div class="ib" style="left:1031px;top:452px;height:6.8px;background:#fff"></div>
<div class="lab" style="top:420.0px;font-weight:700;color:#0f1e45;">Downstream Throughput</div>
<div class="val" style="top:420.0px;font-weight:700;color:#0f1e45;">2.2kbps</div>
<div class="spk" style="top:437.5px"></div>
<div class="sect" style="top:488.9px">Latency</div>
<div class="lab" style="top:525.7px;">Client RTT</div>
<div class="val" style="top:525.7px;">22.2ms</div>
<div class="spk" style="top:543.0px"></div>
<div class="lab" style="top:586.8px;">Server RTT</div>
<div class="val" style="top:586.8px;">6.9ms</div>
<div class="spk" style="top:604.0px"></div>
<div class="lab" style="top:647.8px;">Latency</div>
<div class="val" style="top:647.8px;">13.5ms</div>
<div class="spk" style="top:665.0px"></div>
<div class="lab" style="top:708.8px;">App Latency</div>
<div class="val" style="top:708.8px;">0ms</div>
<div class="spk" style="top:726.0px"></div>
<div class="lab" style="top:769.8px;">Connection Duration</div>
<div class="val" style="top:769.8px;">0ms</div>
<div class="spk" style="top:787.0px"></div>
<svg width="1335" height="829" style="position:absolute;left:0;top:0">
<path d="M1052,378.5 C1080,377.5 1100,377.5 1130,378.8 C1160,379.5 1190,378 1220,378.6 C1245,379 1262,378 1278,377.6" fill="none" stroke="#4f95f7" stroke-width="2"/>
<path d="M1052,439.8 C1080,439 1100,439.5 1130,440 C1160,439.5 1190,439.5 1220,440 C1245,440 1262,439 1278,438.8" fill="none" stroke="#a5009a" stroke-width="2"/>
<path d="M1052,545.2 C1100,545 1150,544.8 1200,545 C1240,545 1260,545 1278,545" fill="none" stroke="#8591a6" stroke-width="2"/>
<path d="M1052,607.3 C1070,606.8 1080,606 1090,606.1 C1105,606.3 1115,607.8 1126,607.9 C1150,607.5 1180,606.8 1203,607 C1230,607.6 1255,607.9 1278,607.9" fill="none" stroke="#8591a6" stroke-width="2"/>
<path d="M1052,680.3 C1065,673 1078,667 1089,667.2 C1102,667.5 1110,674 1122,675.3 C1140,676.5 1150,676.5 1160,676.7 C1180,677.5 1190,679.6 1201,679.4 C1215,679 1225,673.5 1239,673 C1255,672 1265,671.5 1278,671.3" fill="none" stroke="#8591a6" stroke-width="2"/>
</svg>
</div>
<div style="position:absolute;left:1309.2px;top:137px;width:6.7px;height:681px;background:#f5f6f9;border-radius:3px 3px 0 0"></div>
<div style="position:absolute;left:1309.2px;top:384px;width:7.8px;height:433.5px;background:#e1e5ef;border-radius:4px 3px 0 4px"></div>
</div></body></html>
